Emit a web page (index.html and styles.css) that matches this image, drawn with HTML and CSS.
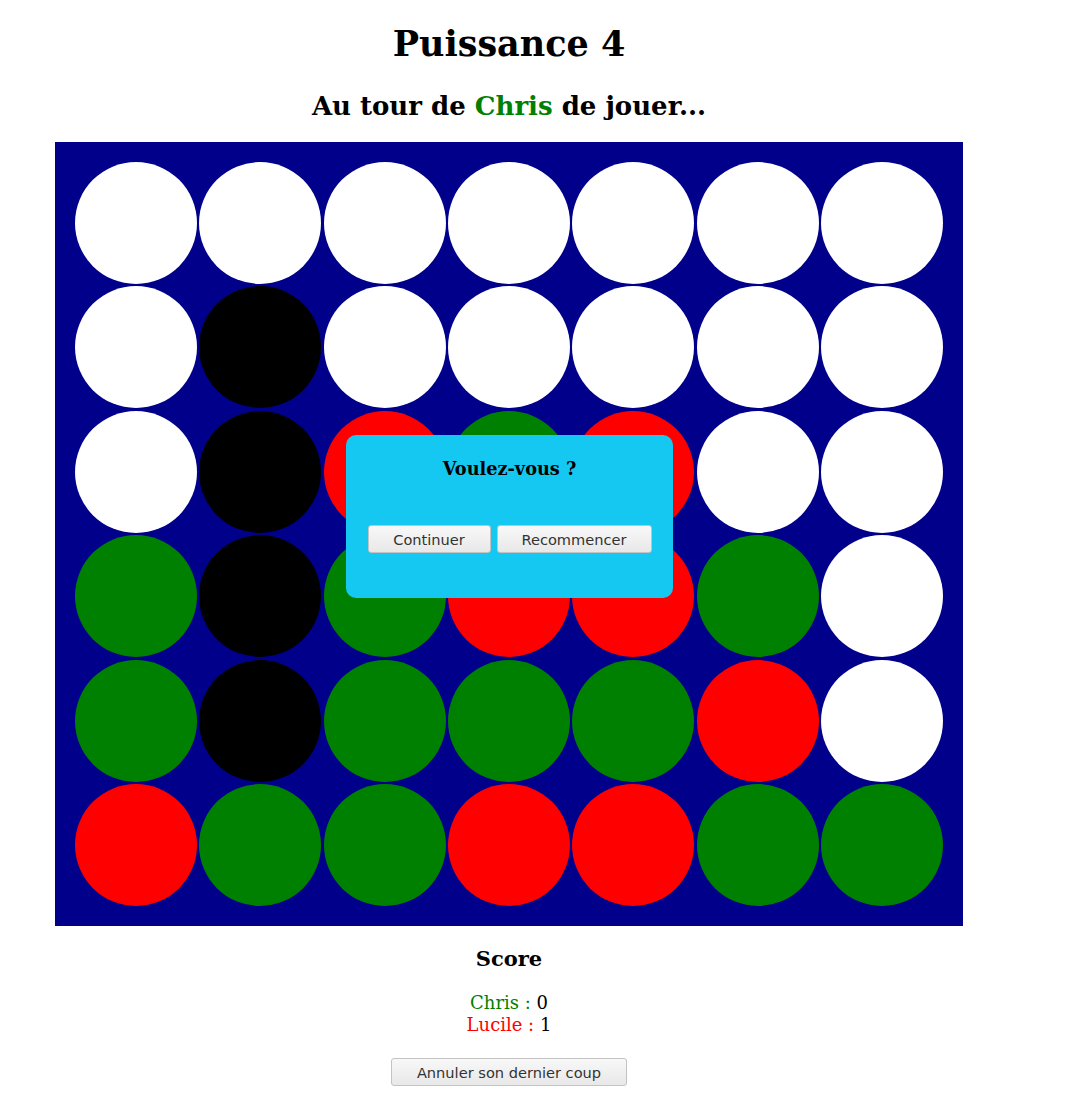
FILE: index.html
```html
<!DOCTYPE html>
<html lang="fr">
<head>
<meta charset="utf-8">
<title>Puissance 4</title>
<link rel="stylesheet" href="styles.css">
</head>
<body>
<div class="page">
  <h1 class="title">Puissance 4</h1>
  <h2 class="turn">Au tour de <span class="p1">Chris</span> de jouer...</h2>
  <div class="board-wrap">
    <div class="board">
      <div class="cell empty"></div><div class="cell empty"></div><div class="cell empty"></div><div class="cell empty"></div><div class="cell empty"></div><div class="cell empty"></div><div class="cell empty"></div>
      <div class="cell empty"></div><div class="cell win"></div><div class="cell empty"></div><div class="cell empty"></div><div class="cell empty"></div><div class="cell empty"></div><div class="cell empty"></div>
      <div class="cell empty"></div><div class="cell win"></div><div class="cell red"></div><div class="cell green"></div><div class="cell red"></div><div class="cell empty"></div><div class="cell empty"></div>
      <div class="cell green"></div><div class="cell win"></div><div class="cell green"></div><div class="cell red"></div><div class="cell red"></div><div class="cell green"></div><div class="cell empty"></div>
      <div class="cell green"></div><div class="cell win"></div><div class="cell green"></div><div class="cell green"></div><div class="cell green"></div><div class="cell red"></div><div class="cell empty"></div>
      <div class="cell red"></div><div class="cell green"></div><div class="cell green"></div><div class="cell red"></div><div class="cell red"></div><div class="cell green"></div><div class="cell green"></div>
    </div>
    <div class="dialog">
      <h3 class="dialog-title">Voulez-vous ?</h3>
      <div class="dialog-actions">
        <button class="btn btn-continue">Continuer</button>
        <button class="btn btn-restart">Recommencer</button>
      </div>
    </div>
  </div>
  <h3 class="score-title">Score</h3>
  <div class="scores">
    <div><span class="p1">Chris :</span> 0</div>
    <div><span class="p2">Lucile :</span> 1</div>
  </div>
  <button class="btn btn-undo">Annuler son dernier coup</button>
</div>
</body>
</html>
```

FILE: styles.css
```css
html, body {
  margin: 0;
  padding: 0;
  background: #ffffff;
}

body {
  font-family: "DejaVu Serif", serif;
  color: #000;
}

.page {
  width: 1018px;
  display: flex;
  flex-direction: column;
  align-items: center;
  text-align: center;
}

.title {
  font-size: 35px;
  font-weight: bold;
  margin: 21px 0 0;
  line-height: 46px;
}

.turn {
  font-size: 26px;
  font-weight: bold;
  margin: 23px 0 0;
  line-height: 32px;
}

.p1 { color: #008000; }
.p2 { color: #ff0000; }

.board-wrap {
  position: relative;
  margin-top: 20px;
}

.board {
  width: 868px;
  height: 744px;
  padding: 20px;
  background: #00008b;
  display: grid;
  grid-template-columns: repeat(7, 122px);
  grid-template-rows: repeat(6, 122px);
  justify-content: space-between;
  align-content: space-between;
}

.cell {
  width: 122px;
  height: 122px;
  border-radius: 50%;
}

.empty { background: #ffffff; }
.win { background: #000000; }
.red { background: #ff0000; }
.green { background: #008000; }

.dialog {
  position: absolute;
  left: 291px;
  top: 293px;
  width: 327px;
  height: 163px;
  box-sizing: border-box;
  background: #15c8f1;
  border-radius: 10px;
  display: flex;
  flex-direction: column;
  align-items: center;
  padding-top: 22px;
}

.dialog-title {
  font-size: 17.7px;
  font-weight: bold;
  line-height: 24px;
  margin: 0;
}

.dialog-actions {
  display: flex;
  gap: 6px;
  margin-top: 44px;
}

.btn {
  font-family: "DejaVu Sans", sans-serif;
  font-size: 14.6px;
  color: #333333;
  height: 28px;
  padding: 0 20px;
  background: linear-gradient(#f8f8f8, #e8e8e8);
  border: 1px solid #c3c3c3;
  border-radius: 3px;
  box-sizing: border-box;
}

.btn-continue { width: 123px; }
.btn-restart { width: 155px; }

.score-title {
  font-size: 21px;
  font-weight: bold;
  line-height: 26px;
  margin: 20px 0 0;
}

.scores {
  margin-top: 20px;
  font-size: 18px;
  line-height: 22px;
}

.btn-undo {
  margin-top: 22px;
  width: 236px;
}
```
